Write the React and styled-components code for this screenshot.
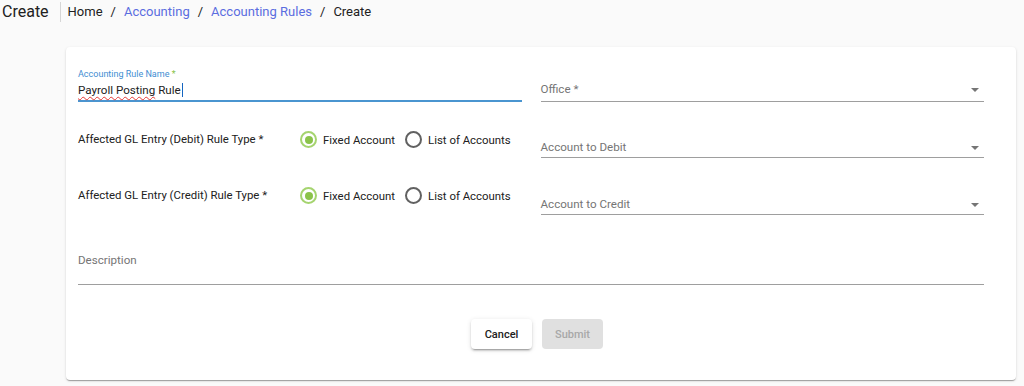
import React from "react";
import styled, { createGlobalStyle } from "styled-components";

const GlobalStyle = createGlobalStyle`
  body {
    margin: 0;
    background: #fafafa;
    font-family: Roboto, "Liberation Sans", sans-serif;
    color: rgba(0, 0, 0, 0.87);
  }
`;

const Page = styled.div`
  width: 1024px;
  height: 386px;
  overflow: hidden;
`;

const TopBar = styled.div`
  display: flex;
  align-items: center;
  height: 23px;
  padding-left: 2px;
`;

const Title = styled.h1`
  margin: 0 7px 0 0;
  font-size: 16px;
  font-weight: 400;
  color: #212121;
  padding-right: 11px;
  border-right: 1px solid #d6d6d6;
  line-height: 20px;
`;

const Crumbs = styled.nav`
  display: flex;
  align-items: center;
  gap: 8px;
  font-size: 13px;
  color: #212121;
`;

const Crumb = styled.span`
  color: ${(p) => (p.$link ? "#5a6de0" : "#212121")};
`;

const Card = styled.div`
  margin: 24px 8px 0 66px;
  background: #fff;
  border-radius: 4px;
  box-shadow: 0 2px 1px -1px rgba(0, 0, 0, 0.2), 0 1px 1px 0 rgba(0, 0, 0, 0.14),
    0 1px 3px 0 rgba(0, 0, 0, 0.12);
  padding: 18px 32px 31px 12px;
`;

const Form = styled.div`
  display: grid;
  grid-template-columns: 1fr 1fr;
  grid-template-rows: 37px 56px 57px 70px;
  column-gap: 19px;
`;

const InputField = styled.div`
  display: flex;
  flex-direction: column;
  justify-content: flex-end;
  border-bottom: 2px solid #4a95d0;
`;

const FloatLabel = styled.label`
  font-size: 9px;
  line-height: 11px;
  color: #3f8ed2;
  span {
    color: #8bc34a;
  }
`;

const InputText = styled.div`
  font-size: 11.6px;
  line-height: 20px;
  color: #212121;
  display: flex;
  align-items: center;
`;

const Misspelt = styled.span`
  text-decoration: underline wavy #e53935;
  text-decoration-thickness: 1px;
  text-underline-offset: 2px;
`;

const Caret = styled.i`
  display: inline-block;
  width: 1px;
  height: 14px;
  background: #1565c0;
  margin-left: 1px;
`;

const SelectField = styled.div`
  display: flex;
  align-items: flex-end;
  justify-content: space-between;
  border-bottom: 1px solid #9e9e9e;
  padding-bottom: ${(p) => p.$pb || 3}px;
  font-size: 11.6px;
  line-height: 14px;
  color: #757575;
`;

const Arrow = styled.span`
  width: 0;
  height: 0;
  border-left: 4.5px solid transparent;
  border-right: 4.5px solid transparent;
  border-top: 4.5px solid #757575;
  margin: 0 5px 4px 0;
`;

const RuleRow = styled.div`
  display: flex;
  align-items: flex-start;
  padding-top: 29px;
  font-size: 11.4px;
  line-height: 16px;
`;

const RuleLabel = styled.div`
  width: 222px;
  color: #212121;
`;

const RadioGroup = styled.div`
  display: flex;
  gap: 10px;
`;

const RadioOption = styled.label`
  display: flex;
  align-items: center;
  gap: 6px;
  color: #212121;
`;

const Circle = styled.span`
  box-sizing: border-box;
  width: 17px;
  height: 17px;
  border-radius: 50%;
  border: 2px solid ${(p) => (p.$on ? "#a5d46f" : "#616161")};
  display: flex;
  align-items: center;
  justify-content: center;
  &::after {
    content: "";
    width: 8px;
    height: 8px;
    border-radius: 50%;
    background: ${(p) => (p.$on ? "#8bc34a" : "transparent")};
  }
`;

const Description = styled(SelectField)`
  grid-column: 1 / 3;
  padding-bottom: 17px;
`;

const Actions = styled.div`
  display: flex;
  justify-content: center;
  gap: 10px;
  margin: 34px 0 0 12px;
`;

const Button = styled.button`
  font-family: Roboto, "Liberation Sans", sans-serif;
  font-size: 11px;
  font-weight: 500;
  height: 30px;
  min-width: 61px;
  padding: 0 12px;
  border: none;
  border-radius: 4px;
  background: ${(p) => (p.$disabled ? "#e0e0e0" : "#fff")};
  color: ${(p) => (p.$disabled ? "#a8a8a8" : "#212121")};
  box-shadow: ${(p) =>
    p.$disabled
      ? "none"
      : "0 3px 1px -2px rgba(0,0,0,.2), 0 2px 2px 0 rgba(0,0,0,.14), 0 1px 5px 0 rgba(0,0,0,.12)"};
`;

const Radios = () => (
  <RadioGroup>
    <RadioOption>
      <Circle $on />
      Fixed Account
    </RadioOption>
    <RadioOption>
      <Circle />
      List of Accounts
    </RadioOption>
  </RadioGroup>
);

export default function App() {
  return (
    <Page>
      <GlobalStyle />
      <TopBar>
        <Title>Create</Title>
        <Crumbs>
          <Crumb>Home</Crumb>
          <span>/</span>
          <Crumb $link>Accounting</Crumb>
          <span>/</span>
          <Crumb $link>Accounting Rules</Crumb>
          <span>/</span>
          <Crumb>Create</Crumb>
        </Crumbs>
      </TopBar>
      <Card>
        <Form>
          <InputField>
            <FloatLabel>
              Accounting Rule Name <span>*</span>
            </FloatLabel>
            <InputText>
              <Misspelt>Payroll Posting</Misspelt>&nbsp;Rule
              <Caret />
            </InputText>
          </InputField>
          <SelectField $pb={5}>
            Office *
            <Arrow />
          </SelectField>
          <RuleRow>
            <RuleLabel>Affected GL Entry (Debit) Rule Type *</RuleLabel>
            <Radios />
          </RuleRow>
          <SelectField>
            Account to Debit
            <Arrow />
          </SelectField>
          <RuleRow>
            <RuleLabel>Affected GL Entry (Credit) Rule Type *</RuleLabel>
            <Radios />
          </RuleRow>
          <SelectField>
            Account to Credit
            <Arrow />
          </SelectField>
          <Description>Description</Description>
        </Form>
        <Actions>
          <Button>Cancel</Button>
          <Button $disabled>Submit</Button>
        </Actions>
      </Card>
    </Page>
  );
}
